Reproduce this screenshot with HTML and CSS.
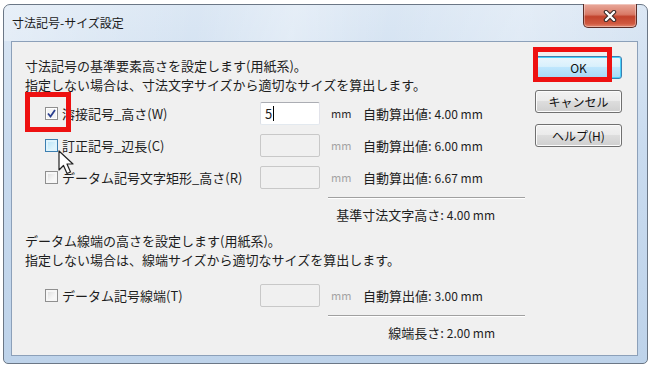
FILE: index.html
```html
<!DOCTYPE html>
<html lang="ja">
<head>
    <meta charset="UTF-8">
    <meta name="viewport" content="width=device-width, initial-scale=1.0">
    <title>寸法記号-サイズ設定</title>
    <link rel="stylesheet" href="styles.css">
</head>
<body>
    <div class="window">
        <div class="titlebar">
            <span class="title">寸法記号-サイズ設定</span>
            <span class="close">
                <svg width="14" height="12" viewBox="0 0 14 12">
                    <path d="M3 2 L11 10 M11 2 L3 10" stroke="#3a2a28" stroke-width="4.5" stroke-linecap="round"/>
                    <path d="M3 2 L11 10 M11 2 L3 10" stroke="#ffffff" stroke-width="2.4" stroke-linecap="round"/>
                </svg>
            </span>
        </div>
        <div class="client">
            <div class="main">
                <p class="note">寸法記号の基準要素高さを設定します(用紙系)。<br>指定しない場合は、寸法文字サイズから適切なサイズを算出します。</p>
                <div class="rows">
                    <div class="row">
                        <span class="check"><span class="box checked"><svg width="9" height="9" viewBox="0 0 9 9"><path d="M1 4.5 L3.5 7.5 L8 1" fill="none" stroke="#2b3f8f" stroke-width="1.8"/></svg></span>溶接記号_高さ(W)</span>
                        <span class="field active">5<i class="caret"></i></span>
                        <span class="unit">mm</span>
                        <span class="auto">自動算出値: <b>4.00 mm</b></span>
                    </div>
                    <div class="row">
                        <span class="check"><span class="box hover"></span>訂正記号_辺長(C)</span>
                        <span class="field"></span>
                        <span class="unit off">mm</span>
                        <span class="auto">自動算出値: <b>6.00 mm</b></span>
                    </div>
                    <div class="row">
                        <span class="check"><span class="box"></span>データム記号文字矩形_高さ(R)</span>
                        <span class="field"></span>
                        <span class="unit off">mm</span>
                        <span class="auto">自動算出値: <b>6.67 mm</b></span>
                    </div>
                </div>
                <div class="summary">基準寸法文字高さ: <b>4.00 mm</b></div>

                <p class="note second">データム線端の高さを設定します(用紙系)。<br>指定しない場合は、線端サイズから適切なサイズを算出します。</p>
                <div class="rows single">
                    <div class="row">
                        <span class="check"><span class="box"></span>データム記号線端(T)</span>
                        <span class="field"></span>
                        <span class="unit off">mm</span>
                        <span class="auto">自動算出値: <b>3.00 mm</b></span>
                    </div>
                </div>
                <div class="summary">線端長さ: <b>2.00 mm</b></div>
            </div>
            <div class="buttons">
                <span class="btn default">OK</span>
                <span class="btn">キャンセル</span>
                <span class="btn">ヘルプ(H)</span>
            </div>
        </div>

        <!-- 注釈の赤枠とマウスカーソル -->
        <div class="mark mark-check"></div>
        <div class="mark mark-ok"></div>
        <svg class="cursor" width="16" height="26" viewBox="0 0 16 26">
            <path d="M1 1 L1 20 L5.5 15.5 L9 23.5 L12.5 22 L9 14 L15 14 Z" fill="#ffffff" stroke="#222222" stroke-width="1.2" stroke-linejoin="round"/>
        </svg>
    </div>
</body>
</html>
```

FILE: styles.css
```css
*{
    box-sizing: border-box;
}
body{
    margin: 0;
    background: #ffffff;
    font-family: "Noto Sans CJK JP", "Noto Sans", sans-serif;
    color: #1e1e1e;
}
.window{
    position: relative;
    width: 645px;
    height: 360px;
    margin: 4px 0 0 3px;
    border: 1px solid #6b7786;
    border-radius: 7px 7px 5px 5px;
    background: linear-gradient(180deg, #dbe7f4 0%, #c9dbef 40%, #bed3ea 100%);
    display: flex;
    flex-direction: column;
}
.titlebar{
    height: 36px;
    display: flex;
    align-items: flex-start;
    justify-content: space-between;
    padding-left: 8px;
    background: linear-gradient(100deg, rgba(255,255,255,0.35) 0%, rgba(255,255,255,0) 30%, rgba(255,255,255,0.3) 45%, rgba(255,255,255,0) 60%, rgba(255,255,255,0.25) 80%, rgba(255,255,255,0) 100%);
    border-radius: 6px 6px 0 0;
}
.title{
    font-size: 12px;
    line-height: 16px;
    margin-top: 10px;
    color: #1a1a1a;
}
.close{
    width: 54px;
    height: 24px;
    margin: -1px 10px 0 0;
    border: 1px solid #5b2d27;
    border-top: none;
    border-radius: 0 0 5px 5px;
    background: linear-gradient(180deg, #e9a99b 0%, #d97a66 45%, #c2432c 55%, #d0593f 85%, #e3876f 100%);
    display: flex;
    align-items: center;
    justify-content: center;
    box-shadow: inset 0 0 0 1px rgba(255,255,255,0.35);
}
.client{
    flex: 1;
    margin: 0 9px 7px 7px;
    border: 1px solid #8ca0b9;
    background: #f0f0f0;
    display: flex;
}
.main{
    width: 523px;
    padding: 14px 0 0 13px;
    font-size: 13px;
}
.note{
    margin: 0;
    line-height: 19px;
}
.note.second{
    margin-top: 7px;
}
.rows{
    margin-top: 3px;
    padding-left: 20px;
}
.rows.single{
    margin-top: 10px;
}
.row{
    height: 32px;
    display: grid;
    grid-template-columns: 215px 60px 43px auto;
    align-items: center;
}
.check{
    display: flex;
    align-items: center;
    gap: 4px;
    white-space: nowrap;
}
.box{
    width: 13px;
    height: 13px;
    border: 1px solid #8f8f8f;
    background: linear-gradient(135deg, #d8d8d8 0%, #f4f4f4 60%, #ffffff 100%);
    box-shadow: inset 0 0 0 2px #f6f6f6;
    display: flex;
    align-items: center;
    justify-content: center;
}
.box.checked{
    background: #f4f4f4;
    box-shadow: inset 0 0 0 1px #ffffff;
}
.box.hover{
    border-color: #3c7fb1;
    background: linear-gradient(135deg, #b4e2f8 0%, #d8f2fc 60%, #eefaff 100%);
    box-shadow: inset 0 0 0 2px #def4fd;
}
.field{
    height: 23px;
    border: 1px solid #c8c8c8;
    border-radius: 2px;
    background: #f0f0f0;
    font-size: 13px;
    line-height: 21px;
    padding-left: 4px;
    display: flex;
    align-items: center;
}
.field.active{
    background: #ffffff;
    border-color: #abadb3 #e2e3ea #e3e9ef #dbdfe6;
}
.caret{
    width: 1px;
    height: 15px;
    background: #000000;
    margin-left: 1px;
}
.unit{
    padding-left: 11px;
    font-size: 11px;
    color: #2a2a2a;
}
.unit.off{
    color: #a3a3a3;
}
.auto{
    font-size: 13px;
    white-space: nowrap;
}
b{
    font-weight: normal;
    font-size: 12px;
}
.summary{
    width: 197px;
    margin: 4px 0 0 303px;
    border-top: 1px solid #a0a0a0;
    box-shadow: inset 0 1px 0 #ffffff;
    padding: 7px 30px 0 0;
    text-align: right;
    line-height: 19px;
    white-space: nowrap;
}
.buttons{
    width: 87px;
    margin: 14px 0 0 0;
    display: flex;
    flex-direction: column;
    gap: 11px;
}
.btn{
    height: 23px;
    border: 1px solid #707070;
    border-radius: 3px;
    background: linear-gradient(180deg, #f2f2f2 0%, #ebebeb 45%, #dddddd 50%, #cfcfcf 100%);
    box-shadow: inset 0 0 0 1px #fbfbfb;
    font-size: 12px;
    line-height: 21px;
    text-align: center;
    color: #111111;
}
.btn.default{
    border-color: #3c7fb1;
    background: linear-gradient(180deg, #eaf6fd 0%, #d9f0fc 45%, #bee6fd 50%, #a7d9f5 100%);
    box-shadow: inset 0 0 0 1px #48d0fa;
}
.mark{
    position: absolute;
    border: 5px solid #ee1111;
}
.mark-check{
    left: 21px;
    top: 87px;
    width: 46px;
    height: 40px;
}
.mark-ok{
    left: 529px;
    top: 42px;
    width: 79px;
    height: 35px;
}
.cursor{
    position: absolute;
    left: 54px;
    top: 145px;
}
```
